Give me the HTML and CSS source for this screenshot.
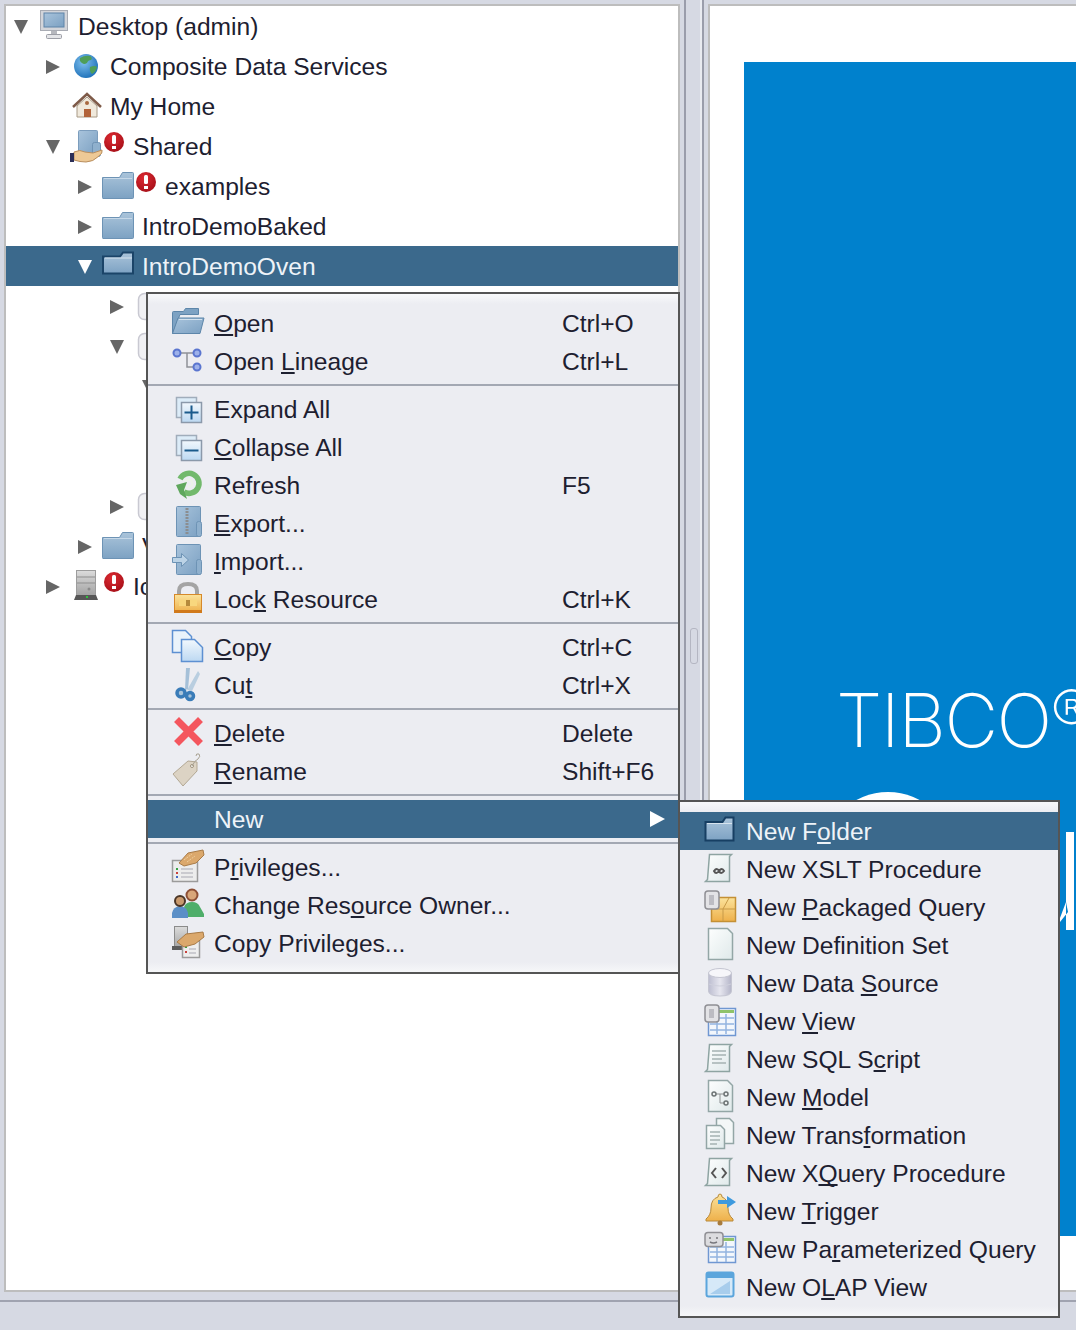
FILE: index.html
```html
<!DOCTYPE html>
<html lang="en">
<head>
    <meta charset="UTF-8">
    <meta name="viewport" content="width=device-width, initial-scale=1.0">
    <title>Studio</title>
    <link rel="stylesheet" href="styles.css">
</head>
<body>
    <svg class="icon-defs" xmlns="http://www.w3.org/2000/svg">
        <defs>
            <linearGradient id="g-folder" x1="0" y1="0" x2="0" y2="1"><stop offset="0" stop-color="#aac4da"/><stop offset="1" stop-color="#7da2c3"/></linearGradient>
            <linearGradient id="g-panel" x1="0" y1="0" x2="1" y2="1"><stop offset="0" stop-color="#a9c4dc"/><stop offset="1" stop-color="#7ba0c2"/></linearGradient>
            <linearGradient id="g-page" x1="0" y1="0" x2="1" y2="1"><stop offset="0" stop-color="#fdfefe"/><stop offset="1" stop-color="#dfe9ea"/></linearGradient>
            <linearGradient id="g-sheet" x1="0" y1="0" x2="0" y2="1"><stop offset="0" stop-color="#f2f8fd"/><stop offset="1" stop-color="#bcd8f2"/></linearGradient>
            <linearGradient id="g-gold" x1="0" y1="0" x2="0" y2="1"><stop offset="0" stop-color="#fbe39c"/><stop offset="1" stop-color="#eeb04a"/></linearGradient>
            <linearGradient id="g-cyl" x1="0" y1="0" x2="1" y2="0"><stop offset="0" stop-color="#bcbdd0"/><stop offset=".5" stop-color="#e6e6ef"/><stop offset="1" stop-color="#b4b5c8"/></linearGradient>
            <linearGradient id="g-metal" x1="0" y1="0" x2="0" y2="1"><stop offset="0" stop-color="#dcdcdc"/><stop offset="1" stop-color="#a2a2a2"/></linearGradient>
            <radialGradient id="g-globe" cx=".4" cy=".35" r=".7"><stop offset="0" stop-color="#7fc0ee"/><stop offset="1" stop-color="#1c6fb8"/></radialGradient>
            <radialGradient id="g-bang" cx=".4" cy=".3" r=".8"><stop offset="0" stop-color="#dc2a32"/><stop offset="1" stop-color="#a30d16"/></radialGradient>
        </defs>

        <!-- tree icons -->
        <symbol id="t-folder" viewBox="0 0 34 40"><path d="M.5 11.500h17l3-5h10q1 0 1 1v24q0 1-1 1H1q-.5 0-.5-1z" fill="url(#g-folder)" stroke="#6d93b5"/><path d="M2 12.500h28" stroke="#c6d8e8"/></symbol>
        <symbol id="t-folder-selected" viewBox="0 0 34 40"><path d="M1 10.500h17l3-4h10v21H1z" fill="url(#g-folder)" stroke="#1b4468" stroke-width="2"/><path d="M3 12h27" stroke="#d6e3ee"/></symbol>
        <symbol id="t-desktop" viewBox="0 0 34 40"><rect x="2.500" y="4.500" width="27" height="20" fill="#d3d5da" stroke="#a9acb4"/><rect x="6" y="7" width="20" height="14" fill="url(#g-panel)" stroke="#5f84a8"/><rect x="13" y="25" width="6" height="3" fill="#b6b8be"/><rect x="8.500" y="28.500" width="15" height="4" rx="1" fill="#e4e5e8" stroke="#9c9ea6"/></symbol>
        <symbol id="t-globe" viewBox="0 0 34 40"><circle cx="16" cy="20" r="12" fill="url(#g-globe)"/><path d="M10 12q5-3 10-2 3 2 1 4-3 0-4 3-3 2-5 0-3-2-2-5zM20 21q5-2 7 0-1 5-5 7-3-3-2-7z" fill="#4f9e58"/></symbol>
        <symbol id="t-house" viewBox="0 0 34 40"><path d="M7 20v11h20V20l-10-9z" fill="#f0e9dc" stroke="#a89a86"/><path d="M3 21L17 8l14 13" fill="none" stroke="#7e5a48" stroke-width="2.500"/><rect x="14" y="23" width="7" height="8" fill="#b2633a"/><circle cx="17" cy="17" r="2" fill="#a8683f"/></symbol>
        <symbol id="t-shared" viewBox="0 0 34 40"><rect x="8.500" y="4.500" width="19" height="24" rx="1" fill="url(#g-panel)" stroke="#7c9dbd"/><rect x="22.500" y="16.500" width="8" height="14" rx="2" fill="#8fb0cd" stroke="#6f93b4"/><path d="M4 26q6-3 11 0l8 1 9-3q1 3-3 6-6 6-13 6-6 0-12-2z" fill="#edc996" stroke="#b98e5e"/><rect x="0" y="27" width="4" height="9" fill="#2b2e57"/></symbol>
        <symbol id="t-server" viewBox="0 0 34 40"><rect x="6.500" y="4.500" width="19" height="25" fill="url(#g-metal)" stroke="#9d9d9d"/><path d="M7 11h18M7 17h18" stroke="#8e8e8e"/><circle cx="19" cy="23" r="1.500" fill="#8a8a8a"/><path d="M4 34l2-5h20l2 5z" fill="#565656"/><rect x="16" y="30" width="2" height="2" fill="#2fc13c"/></symbol>
        <symbol id="t-cylinder" viewBox="0 0 34 40"><rect x="4.500" y="7.500" width="24" height="26" rx="6" fill="#f1f1f4" stroke="#c9c9d2" stroke-width="1.500"/></symbol>
        <symbol id="t-bang" viewBox="0 0 23 40"><circle cx="10" cy="16" r="10" fill="url(#g-bang)"/><rect x="8" y="9" width="4" height="9" rx="1.500" fill="#fff"/><rect x="8" y="20" width="4" height="3" fill="#fff"/></symbol>

        <!-- menu icons -->
        <symbol id="m-open" viewBox="0 0 36 38"><path d="M2.500 29.500v-21q0-1 1-1h10l2-3h13v6H10z" fill="#7da2c3" stroke="#5d86aa"/><path d="M8 14h26l-4 15.500H2.500z" fill="url(#g-panel)" stroke="#5d86aa"/><path d="M9 15.500h23" stroke="#d3e2ee"/></symbol>
        <symbol id="m-lineage" viewBox="0 0 36 38"><path d="M11 11h12M17 11v14h6" fill="none" stroke="#8f9198" stroke-width="1.500"/><g fill="#9db1ea" stroke="#5a75cf" stroke-width="2"><circle cx="7" cy="11" r="3.500"/><circle cx="27" cy="11" r="3.500"/><circle cx="27" cy="25" r="3.500"/></g></symbol>
        <symbol id="m-expand" viewBox="0 0 36 38"><rect x="6.500" y="7.500" width="20" height="20" fill="#dcecf8" stroke="#a0adbb" stroke-width="1.500"/><rect x="11.500" y="12.500" width="20" height="20" fill="url(#g-sheet)" stroke="#8b99aa" stroke-width="1.500"/><path d="M21.500 15.500v14M14.500 22.500h14" stroke="#1a5a8c" stroke-width="2"/></symbol>
        <symbol id="m-collapse" viewBox="0 0 36 38"><rect x="6.500" y="7.500" width="20" height="20" fill="#dcecf8" stroke="#a0adbb" stroke-width="1.500"/><rect x="11.500" y="12.500" width="20" height="20" fill="url(#g-sheet)" stroke="#8b99aa" stroke-width="1.500"/><path d="M14.500 22.500h14" stroke="#1a5a8c" stroke-width="2"/></symbol>
        <symbol id="m-refresh" viewBox="0 0 36 38"><path d="M10 13a10 10 0 1 1 4 13" fill="none" stroke="#72b96c" stroke-width="5.500"/><path d="M6 19l11-3-3 8 3 9-7-5z" fill="#5fa75d"/><path d="M15 15q5-3 7 1t-4 5" fill="none" stroke="#ecf3e8" stroke-width="2"/></symbol>
        <symbol id="m-export" viewBox="0 0 36 38"><rect x="6.500" y="2.500" width="24" height="30" rx="1" fill="url(#g-panel)" stroke="#6d93b5"/><rect x="26.500" y="17.500" width="5" height="15" rx="2" fill="#8fb0cd" stroke="#6d93b5"/><path d="M17 4v26" stroke="#8b8d90" stroke-width="3" stroke-dasharray="2 1"/></symbol>
        <symbol id="m-import" viewBox="0 0 36 38"><rect x="6.500" y="2.500" width="24" height="30" rx="1" fill="url(#g-panel)" stroke="#6d93b5"/><rect x="26.500" y="17.500" width="5" height="15" rx="2" fill="#8fb0cd" stroke="#6d93b5"/><path d="M2.500 15.500h9v-4l7 6.500-7 6.500v-4h-9z" fill="#bcd3e6" stroke="#6d93b5"/></symbol>
        <symbol id="m-lock" viewBox="0 0 36 38"><path d="M9 16v-5q0-7 9-7t9 7v5" fill="none" stroke="#a4a4a4" stroke-width="4"/><rect x="4.500" y="14.500" width="27" height="18" fill="url(#g-gold)" stroke="#d6892a"/><rect x="4" y="30" width="28" height="3" fill="#d17a1c"/><path d="M9 20h18v6H9z" fill="#f8d77e"/><path d="M16 20h4v6h-4z" fill="#b58a3c"/></symbol>
        <symbol id="m-copy" viewBox="0 0 36 38"><path d="M2.500 2.500h13l6 6v16h-19z" fill="#eaf3fb" stroke="#5d90d2" stroke-width="1.500"/><path d="M11.500 11.500h13l8 8v14h-21z" fill="url(#g-sheet)" stroke="#5d90d2" stroke-width="1.500"/></symbol>
        <symbol id="m-cut" viewBox="0 0 36 38"><path d="M15 24L16 2l4 0-2 21z" fill="#a5c0d8"/><path d="M17 24L28 5l2 3-8 17z" fill="#b9cee0"/><circle cx="11" cy="27" r="4" fill="#a9c4da" stroke="#3a7cb8" stroke-width="3.500"/><circle cx="20" cy="30" r="3.500" fill="#a9c4da" stroke="#3a7cb8" stroke-width="3.500"/></symbol>
        <symbol id="m-delete" viewBox="0 0 36 38"><path d="M9 8l19 19M28 8L9 27" stroke="#f4565e" stroke-width="7" stroke-linecap="square"/></symbol>
        <symbol id="m-rename" viewBox="0 0 36 38"><path d="M3 22L18 9l9 1 0 9-14 15z" fill="#dcd3c4" stroke="#b3a894"/><circle cx="22" cy="14" r="1.500" fill="#fff" stroke="#9e927d"/><path d="M22 14q3-6 6-7 3-3 1-5-3-1-3 2" fill="none" stroke="#a9a294"/></symbol>
        <symbol id="m-privileges" viewBox="0 0 36 38"><rect x="2.500" y="12.500" width="25" height="21" fill="#ececec" stroke="#9b9b9b" stroke-width="1.500"/><path d="M11 21h12M11 25h12M11 29h12" stroke="#a8a8b2"/><rect x="6" y="20" width="2" height="2" fill="#38a243"/><rect x="6" y="24" width="2" height="2" fill="#c9413c"/><rect x="6" y="28" width="2" height="2" fill="#4069c8"/><path d="M9 15l9-10 15-3 1 5-8 8-12 3z" fill="#dba86c" stroke="#a97b47"/><path d="M14 12l8-6M17 14l8-6" stroke="#f0cf9e" stroke-dasharray="2 1"/></symbol>
        <symbol id="m-owner" viewBox="0 0 36 38"><path d="M14 21q2-5 8-5t8 5l4 7v3H16z" fill="#4fae6a"/><circle cx="22" cy="9" r="5.500" fill="#d8a679" stroke="#8d4f35" stroke-width="2"/><path d="M2 32v-5q1-6 8-7 7 1 8 7v5z" fill="#5b8fc7"/><circle cx="10" cy="15" r="5" fill="#c99a6e" stroke="#4a3526" stroke-width="2"/></symbol>
        <symbol id="m-copy-privileges" viewBox="0 0 36 38"><rect x="4.500" y="2.500" width="13" height="22" fill="url(#g-metal)" stroke="#8b8b8b"/><rect x="2" y="22" width="16" height="4" fill="#5c5c5c"/><rect x="12.500" y="16.500" width="17" height="17" fill="#eee" stroke="#9b9b9b" stroke-width="1.500"/><rect x="15" y="22" width="2" height="2" fill="#38a243"/><rect x="15" y="27" width="2" height="2" fill="#c9413c"/><path d="M19 25h7M19 29h7" stroke="#a8a8b2"/><path d="M7 18l9-8 17-2 1 5-9 7-11 3z" fill="#dba86c" stroke="#a97b47"/></symbol>

        <!-- submenu icons -->
        <symbol id="s-folder" viewBox="0 0 36 38"><path d="M3.500 10h17l3-4.500h8v23h-28z" fill="url(#g-folder)" stroke="#173f63" stroke-width="2"/><path d="M5 11.500h25" stroke="#d6e3ee"/></symbol>
        <symbol id="s-scroll-xslt" viewBox="0 0 36 38"><path d="M7.500 4.500h22l-2 2v25h-24l2-2z" fill="url(#g-page)" stroke="#8ea4a2" stroke-width="1.500"/><path d="M12 21q3-4 5 0t5 0q-2-4-5 0t-5 0z" fill="none" stroke="#555" stroke-width="2"/></symbol>
        <symbol id="s-scroll-sql" viewBox="0 0 36 38"><path d="M7.500 4.500h22l-2 2v25h-24l2-2z" fill="url(#g-page)" stroke="#8ea4a2" stroke-width="1.500"/><path d="M10 11h14M10 15h14M10 19h10M10 23h14" stroke="#a5b3b2" stroke-width="1.500"/></symbol>
        <symbol id="s-scroll-xquery" viewBox="0 0 36 38"><path d="M7.500 4.500h22l-2 2v25h-24l2-2z" fill="url(#g-page)" stroke="#8ea4a2" stroke-width="1.500"/><path d="M14 14l-4 5 4 5M20 14l4 5-4 5" fill="none" stroke="#555" stroke-width="2"/></symbol>
        <symbol id="s-package" viewBox="0 0 36 38"><rect x="9.500" y="9.500" width="24" height="24" fill="url(#g-gold)" stroke="#c49035" stroke-width="1.500"/><path d="M21 21V33M21 21h12M10 21h11" stroke="#c79a48"/><path d="M27 10l-6 11" stroke="#c79a48"/><rect x="3" y="3" width="14" height="18" rx="3" fill="#e3e3e6" stroke="#8f8f94" stroke-width="1.500"/><rect x="7" y="7" width="5" height="10" fill="#bcbcc2"/></symbol>
        <symbol id="s-page" viewBox="0 0 36 38"><path d="M6.500 2.500h19l5 5v26h-24z" fill="url(#g-page)" stroke="#93a6a6" stroke-width="1.500"/></symbol>
        <symbol id="s-cylinder" viewBox="0 0 36 38"><path d="M6.500 9v18q0 5 11.500 5t11.500-5V9z" fill="url(#g-cyl)" stroke="#c5c6d2"/><ellipse cx="18" cy="9" rx="11.500" ry="4.500" fill="#f6f6fa" stroke="#c5c6d2"/><path d="M7 20q11 4 22 0" fill="none" stroke="#cfd0dc"/></symbol>
        <symbol id="s-view" viewBox="0 0 36 38"><rect x="6.500" y="6.500" width="27" height="27" fill="#f3f7fc" stroke="#6f97d2" stroke-width="1.500"/><rect x="8" y="8" width="24" height="3" fill="#8fc36a"/><path d="M8 16h24M8 22h24M8 28h24M15 12v20M24 12v20" stroke="#93b4e0" stroke-width="1.500"/><rect x="3" y="3" width="14" height="17" rx="3" fill="#e3e3e6" stroke="#8f8f94" stroke-width="1.500"/><rect x="7" y="7" width="5" height="9" fill="#bcbcc2"/></symbol>
        <symbol id="s-model" viewBox="0 0 36 38"><path d="M6.500 2.500h19l5 5v26h-24z" fill="url(#g-page)" stroke="#93a6a6" stroke-width="1.500"/><path d="M13 16h10M18 16v9h5" fill="none" stroke="#8b8f90"/><g fill="#eef2f2" stroke="#6d7475" stroke-width="1.500"><circle cx="12" cy="16" r="2"/><circle cx="24" cy="16" r="2"/><circle cx="24" cy="25" r="2"/></g></symbol>
        <symbol id="s-transform" viewBox="0 0 36 38"><path d="M14.500 2.500h13l4 4v21h-17z" fill="#f3f7f7" stroke="#93a6a6" stroke-width="1.500"/><path d="M4.500 9.500h14l4 4v19h-18z" fill="url(#g-page)" stroke="#93a6a6" stroke-width="1.500"/><path d="M8 16h10M8 20h10M8 24h10M8 28h7" stroke="#a5b3b2" stroke-width="1.500"/></symbol>
        <symbol id="s-trigger" viewBox="0 0 36 38"><path d="M18 2q-2 0-2 3-7 2-7 11 0 7-5 11v2h27v-2q-5-4-5-11 0-9-6-11 0-3-2-3z" fill="url(#g-gold)" stroke="#b88a3c"/><circle cx="18" cy="31" r="2.500" fill="#a87b3c"/><path d="M16 8h9V4l9 6-9 6v-4h-9z" fill="#3e9ade"/></symbol>
        <symbol id="s-param" viewBox="0 0 36 38"><rect x="6.500" y="6.500" width="27" height="26" fill="#f3f7fc" stroke="#6f97d2" stroke-width="1.500"/><rect x="18" y="8" width="14" height="3" fill="#8fc36a"/><path d="M8 17h24M8 22h24M8 27h24M15 17v15M24 12v20" stroke="#93b4e0" stroke-width="1.500"/><rect x="3" y="2.500" width="18" height="14" rx="3" fill="#dcdcdf" stroke="#8f8f94" stroke-width="1.500"/><path d="M8 7v2M15 7v2M8 12q3.500 2 7 0" fill="none" stroke="#77777c" stroke-width="1.500"/></symbol>
        <symbol id="s-olap" viewBox="0 0 36 38"><rect x="4.500" y="4.500" width="27" height="24" rx="2" fill="#d6e9f8" stroke="#5ba5dc" stroke-width="2"/><rect x="5" y="5" width="26" height="5" fill="#5ba5dc"/><path d="M8 26l20-13v13z" fill="#a8cdec"/></symbol>
    </svg>

    <div class="workspace">
        <div class="tree-panel">
            <div class="tree-row level-0"><span class="arrow open"></span><svg class="tree-icon"><use href="#t-desktop"/></svg><span class="tree-label">Desktop (admin)</span></div>
            <div class="tree-row level-1"><span class="arrow closed"></span><svg class="tree-icon"><use href="#t-globe"/></svg><span class="tree-label">Composite Data Services</span></div>
            <div class="tree-row level-1"><span class="arrow"></span><svg class="tree-icon"><use href="#t-house"/></svg><span class="tree-label">My Home</span></div>
            <div class="tree-row level-1"><span class="arrow open"></span><svg class="tree-icon"><use href="#t-shared"/></svg><svg class="tree-bang"><use href="#t-bang"/></svg><span class="tree-label">Shared</span></div>
            <div class="tree-row level-2"><span class="arrow closed"></span><svg class="tree-icon"><use href="#t-folder"/></svg><svg class="tree-bang"><use href="#t-bang"/></svg><span class="tree-label">examples</span></div>
            <div class="tree-row level-2"><span class="arrow closed"></span><svg class="tree-icon"><use href="#t-folder"/></svg><span class="tree-label">IntroDemoBaked</span></div>
            <div class="tree-row level-2 selected"><span class="arrow open"></span><svg class="tree-icon"><use href="#t-folder-selected"/></svg><span class="tree-label">IntroDemoOven</span></div>
            <div class="tree-row level-3"><span class="arrow closed"></span><svg class="tree-icon"><use href="#t-cylinder"/></svg></div>
            <div class="tree-row level-3"><span class="arrow open"></span><svg class="tree-icon"><use href="#t-cylinder"/></svg></div>
            <div class="tree-row level-4"><span class="arrow open"></span></div>
            <div class="tree-row level-4"></div>
            <div class="tree-row level-4"></div>
            <div class="tree-row level-3"><span class="arrow closed"></span><svg class="tree-icon"><use href="#t-cylinder"/></svg></div>
            <div class="tree-row level-2"><span class="arrow closed"></span><svg class="tree-icon"><use href="#t-folder"/></svg><span class="tree-label">V</span></div>
            <div class="tree-row level-1"><span class="arrow closed"></span><svg class="tree-icon"><use href="#t-server"/></svg><svg class="tree-bang"><use href="#t-bang"/></svg><span class="tree-label">Ic</span></div>
        </div>

        <div class="sash"><div class="sash-grip"></div></div>

        <div class="preview-panel">
            <div class="splash">
                <div class="splash-title">TIBCO<sup>®</sup></div>
                <div class="splash-circle"></div>
                <svg class="splash-mark" width="20" height="104" viewBox="0 0 20 104"><path d="M6 2h8v98H6zM6 72L0 88v4l8-10z" fill="#fff"/></svg>
            </div>
        </div>
    </div>
    <div class="status-bar"></div>

    <div class="menu context-menu">
        <div class="menu-item"><svg class="menu-icon"><use href="#m-open"/></svg><span class="menu-label"><u>O</u>pen</span><span class="menu-key">Ctrl+O</span></div>
        <div class="menu-item"><svg class="menu-icon"><use href="#m-lineage"/></svg><span class="menu-label">Open <u>L</u>ineage</span><span class="menu-key">Ctrl+L</span></div>
        <div class="menu-sep"></div>
        <div class="menu-item"><svg class="menu-icon"><use href="#m-expand"/></svg><span class="menu-label">Expand All</span></div>
        <div class="menu-item"><svg class="menu-icon"><use href="#m-collapse"/></svg><span class="menu-label"><u>C</u>ollapse All</span></div>
        <div class="menu-item"><svg class="menu-icon"><use href="#m-refresh"/></svg><span class="menu-label">Refresh</span><span class="menu-key">F5</span></div>
        <div class="menu-item"><svg class="menu-icon"><use href="#m-export"/></svg><span class="menu-label"><u>E</u>xport...</span></div>
        <div class="menu-item"><svg class="menu-icon"><use href="#m-import"/></svg><span class="menu-label"><u>I</u>mport...</span></div>
        <div class="menu-item"><svg class="menu-icon"><use href="#m-lock"/></svg><span class="menu-label">Loc<u>k</u> Resource</span><span class="menu-key">Ctrl+K</span></div>
        <div class="menu-sep"></div>
        <div class="menu-item"><svg class="menu-icon"><use href="#m-copy"/></svg><span class="menu-label"><u>C</u>opy</span><span class="menu-key">Ctrl+C</span></div>
        <div class="menu-item"><svg class="menu-icon"><use href="#m-cut"/></svg><span class="menu-label">Cu<u>t</u></span><span class="menu-key">Ctrl+X</span></div>
        <div class="menu-sep"></div>
        <div class="menu-item"><svg class="menu-icon"><use href="#m-delete"/></svg><span class="menu-label"><u>D</u>elete</span><span class="menu-key">Delete</span></div>
        <div class="menu-item"><svg class="menu-icon"><use href="#m-rename"/></svg><span class="menu-label"><u>R</u>ename</span><span class="menu-key">Shift+F6</span></div>
        <div class="menu-sep"></div>
        <div class="menu-item active"><span class="menu-icon"></span><span class="menu-label">New</span><span class="menu-arrow"></span></div>
        <div class="menu-sep"></div>
        <div class="menu-item"><svg class="menu-icon"><use href="#m-privileges"/></svg><span class="menu-label">P<u>r</u>ivileges...</span></div>
        <div class="menu-item"><svg class="menu-icon"><use href="#m-owner"/></svg><span class="menu-label">Change Res<u>o</u>urce Owner...</span></div>
        <div class="menu-item"><svg class="menu-icon"><use href="#m-copy-privileges"/></svg><span class="menu-label">Copy Privileges...</span></div>
    </div>

    <div class="menu new-menu">
        <div class="menu-item active"><svg class="menu-icon"><use href="#s-folder"/></svg><span class="menu-label">New F<u>o</u>lder</span></div>
        <div class="menu-item"><svg class="menu-icon"><use href="#s-scroll-xslt"/></svg><span class="menu-label">New XSLT Procedure</span></div>
        <div class="menu-item"><svg class="menu-icon"><use href="#s-package"/></svg><span class="menu-label">New <u>P</u>ackaged Query</span></div>
        <div class="menu-item"><svg class="menu-icon"><use href="#s-page"/></svg><span class="menu-label">New Definition Set</span></div>
        <div class="menu-item"><svg class="menu-icon"><use href="#s-cylinder"/></svg><span class="menu-label">New Data <u>S</u>ource</span></div>
        <div class="menu-item"><svg class="menu-icon"><use href="#s-view"/></svg><span class="menu-label">New <u>V</u>iew</span></div>
        <div class="menu-item"><svg class="menu-icon"><use href="#s-scroll-sql"/></svg><span class="menu-label">New SQL S<u>c</u>ript</span></div>
        <div class="menu-item"><svg class="menu-icon"><use href="#s-model"/></svg><span class="menu-label">New <u>M</u>odel</span></div>
        <div class="menu-item"><svg class="menu-icon"><use href="#s-transform"/></svg><span class="menu-label">New Trans<u>f</u>ormation</span></div>
        <div class="menu-item"><svg class="menu-icon"><use href="#s-scroll-xquery"/></svg><span class="menu-label">New X<u>Q</u>uery Procedure</span></div>
        <div class="menu-item"><svg class="menu-icon"><use href="#s-trigger"/></svg><span class="menu-label">New <u>T</u>rigger</span></div>
        <div class="menu-item"><svg class="menu-icon"><use href="#s-param"/></svg><span class="menu-label">New Pa<u>r</u>ameterized Query</span></div>
        <div class="menu-item"><svg class="menu-icon"><use href="#s-olap"/></svg><span class="menu-label">New O<u>L</u>AP View</span></div>
    </div>
</body>
</html>
```

FILE: styles.css
```css
body {
    margin: 0;
    width: 1076px;
    height: 1330px;
    overflow: hidden;
    position: relative;
    background: #d6d9e3;
    color: #1d2030;
    font-family: "Liberation Sans", Arial, sans-serif;
    font-size: 24.6px;
}

.icon-defs {
    position: absolute;
    width: 0;
    height: 0;
}

.workspace {
    display: flex;
    height: 1288px;
    padding: 4px 0 0 4px;
}

/* tree on the left */
.tree-panel {
    flex: none;
    width: 672px;
    background: white;
    border: 2px solid #bdbdbd;
}

.tree-row {
    display: flex;
    align-items: center;
    height: 40px;
}

.level-0 { padding-left: 8px; }
.level-1 { padding-left: 40px; }
.level-2 { padding-left: 72px; }
.level-3 { padding-left: 104px; }
.level-4 { padding-left: 136px; }

.tree-row.selected {
    background: #3b698c;
    color: #eef3f8;
}

.arrow {
    flex: none;
    width: 14px;
    margin-right: 10px;
    margin-top: 2px;
}

.arrow.closed {
    width: 0;
    border-left: 14px solid #666;
    border-top: 7px solid transparent;
    border-bottom: 7px solid transparent;
}

.arrow.open {
    width: 0;
    border-top: 14px solid #666;
    border-left: 7px solid transparent;
    border-right: 7px solid transparent;
}

.selected .arrow.open {
    border-top-color: white;
}

.tree-icon {
    flex: none;
    width: 34px;
    height: 40px;
}

.tree-bang {
    flex: none;
    width: 23px;
    height: 40px;
}

.tree-label {
    margin-left: 6px;
    padding-top: 2px;
    white-space: nowrap;
}

/* divider between the panels */
.sash {
    flex: none;
    width: 24px;
    height: 1300px;
    margin-left: 4px;
    margin-top: -4px;
    box-sizing: border-box;
    border-left: 2px solid #9a9dab;
    position: relative;
}

.sash::after {
    content: "";
    position: absolute;
    top: 0;
    bottom: 0;
    left: 14px;
    width: 2px;
    background: #e9ebf1;
    border-right: 2px solid #9a9dab;
}

.sash-grip {
    position: absolute;
    left: 4px;
    top: 628px;
    width: 6px;
    height: 34px;
    border: 1px solid #b4b6c2;
    border-radius: 3px;
}

/* splash on the right */
.preview-panel {
    flex: 1;
    min-width: 0;
    height: 1288px;
    padding: 56px 0 0 34px;
    box-sizing: border-box;
    background: white;
    border: 2px solid #bdbdbd;
    border-right: none;
}

.splash {
    position: relative;
    height: 1174px;
    background: #0081cd;
    overflow: hidden;
    color: white;
}

.splash-title {
    padding: 620px 0 0 92px;
    font-family: Inter, sans-serif;
    font-weight: 200;
    font-size: 74px;
    line-height: 76px;
    letter-spacing: -1.500px;
    white-space: nowrap;
}

.splash-title sup {
    font-size: 62px;
    font-weight: 200;
    line-height: 0;
    vertical-align: 12px;
    margin-left: 0;
}

.splash-circle {
    position: absolute;
    left: 78px;
    top: 730px;
    width: 132px;
    height: 132px;
    border-radius: 50%;
    background: white;
}

.splash-mark {
    position: absolute;
    left: 316px;
    top: 768px;
}

.status-bar {
    margin-top: 8px;
    height: 28px;
    border-top: 2px solid #a0a3b0;
}

/* popup menus */
.menu {
    position: absolute;
    box-sizing: border-box;
    padding: 10px 0;
    border: 2px solid #555;
    background: linear-gradient(#f8f9fb, #ecedf2 10px, #ecedf2 calc(100% - 10px), #f6f7f9);
}

.context-menu {
    left: 146px;
    top: 292px;
    width: 534px;
    height: 682px;
}

.new-menu {
    left: 678px;
    top: 800px;
    width: 382px;
    height: 518px;
}

.menu-item {
    display: flex;
    align-items: center;
    height: 38px;
    padding-left: 22px;
    white-space: nowrap;
    position: relative;
}

.menu-item.active {
    background: #3b698c;
    color: #eef3f8;
}

.menu-icon {
    flex: none;
    width: 36px;
    height: 38px;
    margin-right: 8px;
}

.menu-label {
    flex: none;
    padding-top: 2px;
    min-width: 348px;
}

.menu-key {
    flex: none;
    padding-top: 2px;
}

.menu-arrow {
    position: absolute;
    left: 502px;
    top: 11px;
    border-left: 15px solid white;
    border-top: 8px solid transparent;
    border-bottom: 8px solid transparent;
}

.menu-sep {
    height: 2px;
    margin: 4px 0;
    background: #a3a8b3;
}

u {
    text-decoration-thickness: 2px;
    text-underline-offset: 2px;
    text-decoration-skip-ink: none;
}
```
